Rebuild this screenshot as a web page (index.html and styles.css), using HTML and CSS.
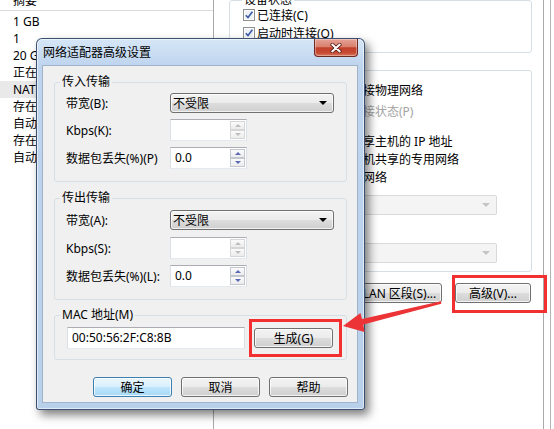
FILE: index.html
```html
<!DOCTYPE html>
<html lang="zh-CN">
<head>
<meta charset="utf-8">
<title>网络适配器高级设置</title>
<link rel="stylesheet" href="styles.css">
</head>
<body>
<div class="screen">
  <div class="list">
    <div class="list-head"><span>摘要</span></div>
    <div class="rows">
      <div class="row">1 GB</div>
      <div class="row">1</div>
      <div class="row">20 GB</div>
      <div class="row">正在使用文件 ...</div>
      <div class="row sel">NAT</div>
      <div class="row">存在</div>
      <div class="row">自动检测</div>
      <div class="row">存在</div>
      <div class="row">自动检测</div>
    </div>
  </div>
  <div class="pane">
    <fieldset class="grp grp-dev">
      <legend>设备状态</legend>
      <div class="chk"><svg class="cb" width="12" height="12" viewBox="0 0 12 12"><rect x="0.5" y="0.5" width="11" height="11" fill="#fff" stroke="#8e8f8f"/><rect x="2" y="2" width="8" height="8" fill="#eef1f6"/><path d="M2.8 6.2 L5 8.6 L9.4 2.8" fill="none" stroke="#3b5ba5" stroke-width="1.6"/></svg><span>已连接(C)</span></div>
      <div class="chk"><svg class="cb" width="12" height="12" viewBox="0 0 12 12"><rect x="0.5" y="0.5" width="11" height="11" fill="#fff" stroke="#8e8f8f"/><rect x="2" y="2" width="8" height="8" fill="#eef1f6"/><path d="M2.8 6.2 L5 8.6 L9.4 2.8" fill="none" stroke="#3b5ba5" stroke-width="1.6"/></svg><span>启动时连接(O)</span></div>
    </fieldset>
    <fieldset class="grp grp-net">
      <legend>网络连接</legend>
      <div class="opt o1"><span class="pre"><span>桥接模式(B): 直接连</span></span><span>接物理网络</span></div>
      <div class="opt o2 dim"><span class="pre"><span>复制物理网络连</span></span><span>接状态(P)</span></div>
      <div class="opt o3"><span class="pre"><span>NAT 模式(N): 用于共</span></span><span>享主机的 IP 地址</span></div>
      <div class="opt"><span class="pre"><span>仅主机模式(H): 与主</span></span><span>机共享的专用网络</span></div>
      <div class="opt"><span class="pre"><span>自定义(U): 特定虚拟</span></span><span>网络</span></div>
      <div class="combo-off c1"><i class="tri-off"></i></div>
      <div class="opt o6"><span class="pre"><span>LAN 区段(L):</span></span><span></span></div>
      <div class="combo-off c2"><i class="tri-off"></i></div>
    </fieldset>
    <div class="pane-btns">
      <div class="btn lan">LAN 区段(S)...</div>
      <div class="btn adv">高级(V)...</div>
    </div>
  </div>
  <div class="edge"></div>
</div>

<div class="dialog">
  <div class="titlebar">
    <span class="title">网络适配器高级设置</span>
    <span class="close"><svg width="12" height="10" viewBox="0 0 12 10"><path d="M2.2 1.6 L9.8 8.4 M9.8 1.6 L2.2 8.4" stroke="#5a1f16" stroke-width="3.6" stroke-linecap="round"/><path d="M2.2 1.6 L9.8 8.4 M9.8 1.6 L2.2 8.4" stroke="#ffffff" stroke-width="2" stroke-linecap="round"/></svg></span>
  </div>
  <div class="client">
    <fieldset class="grp dgrp g1">
      <legend>传入传输</legend>
      <div class="frow r1"><span class="lbl">带宽(B):</span><div class="combo"><span>不受限</span><i class="tri"></i></div></div>
      <div class="frow r2"><span class="lbl">Kbps(K):</span><div class="spin off"><span class="val"></span><span class="arrows"><i class="sb up"></i><i class="sb dn"></i></span></div></div>
      <div class="frow r3"><span class="lbl">数据包丢失(%)(P)</span><div class="spin"><span class="val">0.0</span><span class="arrows"><i class="sb up"></i><i class="sb dn"></i></span></div></div>
    </fieldset>
    <fieldset class="grp dgrp g2">
      <legend>传出传输</legend>
      <div class="frow r1"><span class="lbl">带宽(A):</span><div class="combo"><span>不受限</span><i class="tri"></i></div></div>
      <div class="frow r2"><span class="lbl">Kbps(S):</span><div class="spin off"><span class="val"></span><span class="arrows"><i class="sb up"></i><i class="sb dn"></i></span></div></div>
      <div class="frow r3"><span class="lbl">数据包丢失(%)(L):</span><div class="spin"><span class="val">0.0</span><span class="arrows"><i class="sb up"></i><i class="sb dn"></i></span></div></div>
    </fieldset>
    <fieldset class="grp dgrp g3">
      <legend>MAC 地址(M)</legend>
      <div class="macrow">
        <div class="mac">00:50:56:2F:C8:8B</div>
        <div class="btn gen">生成(G)</div>
      </div>
    </fieldset>
    <div class="dbtns">
      <div class="btn def">确定</div>
      <div class="btn">取消</div>
      <div class="btn">帮助</div>
    </div>
  </div>
</div>

<div class="mark mark-gen"></div>
<div class="mark mark-adv"></div>
<svg class="arrow" width="554" height="429" viewBox="0 0 554 429">
  <polygon points="343,326 360.5,313 362,319 440.8,301.3 441.4,303.7 363.4,324.6 364.5,332" fill="#ec3336"/>
</svg>
</body>
</html>
```

FILE: styles.css
```css
* { box-sizing: border-box; }
html, body { margin: 0; padding: 0; }
body {
  width: 554px;
  height: 429px;
  overflow: hidden;
  position: relative;
  background: #fff;
  color: #000;
  font-family: "Noto Sans", "Noto Sans CJK SC", sans-serif;
  font-size: 12px;
}

/* ---------- background window ---------- */
.screen { display: flex; height: 429px; }

.list { width: 214px; border-right: 1px solid #a9a9a9; flex: none; }
.list-head { display: flow-root; height: 11px; border-bottom: 1px solid #dcdcdc; overflow: hidden; }
.list-head span { display: block; margin-top: -9px; line-height: 20px; padding-left: 13px; }
.rows { padding-top: 2px; }
.row { height: 17px; line-height: 17px; padding-left: 13px; white-space: nowrap; }
.row.sel { background: #e9e9e9; }

.pane {
  width: 330px;
  flex: none;
  border-right: 1px solid #a9a9a9;
  padding: 0 11px 0 15px;
}
.edge { width: 7px; flex: none; border-right: 1px solid #b4b4b4; }

.grp { margin: 0; min-width: 0; border: 1px solid #d5dfe5; border-radius: 3px; }
.grp-dev { margin-top: -6px; padding: 0 10px 10px 13px; }
.grp-dev legend, .grp-net legend { line-height: 12px; padding: 0 2px; margin-left: -1px; }
.chk { display: flex; align-items: center; height: 18px; gap: 2px; }
.cb { flex: none; }

.grp-net { margin-top: 11px; padding: 0 10px 8px 17px; }
.opt { display: flex; height: 18px; line-height: 18px; white-space: nowrap; }
.opt.o1 { margin-top: 6px; }
.opt.o2 { margin-top: 3px; }
.opt.o3 { margin-top: 12px; }
.opt.o6 { margin-top: 6px; }
.opt.dim { color: #a3a3a3; }
.pre { width: 116px; flex: none; display: flex; justify-content: flex-end; overflow: hidden; }

.combo-off {
  height: 20px;
  width: 232px;
  margin-left: 18px;
  border: 1px solid #d9d9d9;
  border-radius: 2px;
  background: #f4f4f4;
  display: flex;
  align-items: center;
  justify-content: flex-end;
  padding-right: 6px;
}
.combo-off.c1 { margin-top: 8px; }
.combo-off.c2 { margin-top: 4px; }
.tri-off { width: 0; height: 0; border-left: 4px solid transparent; border-right: 4px solid transparent; border-top: 4px solid #c4c4c4; }

.pane-btns { display: flex; justify-content: flex-end; gap: 13px; margin-top: 11px; padding-right: 1px; }

.btn {
  height: 20px;
  border: 1px solid #707070;
  border-radius: 3px;
  background: linear-gradient(#f3f3f3 0%, #ebebeb 50%, #dddddd 50%, #cfcfcf 100%);
  box-shadow: inset 0 0 0 1px rgba(255,255,255,0.75);
  display: flex;
  align-items: center;
  justify-content: center;
  white-space: nowrap;
  flex: none;
}
.btn.lan { width: 85px; }
.btn.adv { width: 76px; }
.btn.def {
  border-color: #3c7fb1;
  background: linear-gradient(#eaf6fd 0%, #d9f0fc 50%, #bee6fd 50%, #a7d9f5 100%);
}

/* ---------- dialog window ---------- */
.dialog {
  position: absolute;
  left: 36px;
  top: 38px;
  width: 329px;
  height: 372px;
  border: 1px solid rgba(36, 58, 92, 0.85);
  border-radius: 6px 6px 3px 3px;
  background: linear-gradient(180deg, #d6e6f7 0%, #bfd5ee 26px, #b9d0ea 100%);
  box-shadow: inset 0 0 0 1px rgba(255,255,255,0.55), 4px 5px 10px rgba(0,0,0,0.5);
  padding: 0 6px 6px 5px;
  display: flex;
  flex-direction: column;
}
.titlebar { height: 26px; display: flex; justify-content: space-between; align-items: flex-start; flex: none; }
.title { line-height: 27px; padding-left: 1px; }
.close {
  width: 44px;
  height: 18px;
  border: 1px solid #6e2a20;
  border-top: none;
  border-radius: 0 0 4px 4px;
  background: linear-gradient(#e5a296 0%, #d9806f 45%, #c2402a 52%, #c64a32 80%, #d8755a 100%);
  box-shadow: inset 0 0 0 1px rgba(255,255,255,0.35);
  display: flex;
  align-items: center;
  justify-content: center;
}

.client {
  flex: 1;
  background: #f0f0f0;
  border: 1px solid #9fb3cc;
  padding: 8px 10px 5px 11px;
}
.dgrp { padding: 0 11px 12px 11px; }
.dgrp legend { line-height: 16px; padding: 0 2px; margin-left: -6px; }
.g2 { margin-top: 8px; }
.g3 { margin-top: 7px; padding-bottom: 10px; }

.frow { display: flex; align-items: center; }
.g1 .r1 { margin-top: 3px; }
.g1 .r2, .g1 .r3 { margin-top: 6px; }
.g2 .r1 { margin-top: 4px; }
.g2 .r2 { margin-top: 7px; }
.g2 .r3 { margin-top: 6px; }
.lbl { width: 104px; flex: none; white-space: nowrap; }

.combo {
  width: 164px;
  height: 20px;
  border: 1px solid #707070;
  border-radius: 3px;
  background: linear-gradient(#f3f3f3 0%, #ebebeb 50%, #dddddd 50%, #cfcfcf 100%);
  box-shadow: inset 0 0 0 1px rgba(255,255,255,0.7);
  display: flex;
  align-items: center;
  justify-content: space-between;
  padding: 0 6px 0 2px;
}
.tri { width: 0; height: 0; border-left: 4px solid transparent; border-right: 4px solid transparent; border-top: 4px solid #000; }

.spin {
  width: 77px;
  height: 22px;
  display: flex;
  background: #fff;
  border: 1px solid #dbdfe6;
  border-top-color: #abadb3;
  border-bottom-color: #e3e9ef;
}
.val { flex: 1; padding-left: 4px; line-height: 20px; }
.arrows { width: 16px; flex: none; display: flex; flex-direction: column; padding: 1px 1px 1px 0; }
.sb {
  flex: 1;
  border: 1px solid #c3c7cf;
  background: linear-gradient(#fbfbfb, #ececec);
  display: flex;
  align-items: center;
  justify-content: center;
  color: #5d6ab8;
}
.spin.off .sb { border-color: #d6d6d6; color: #bdbdbd; }
.sb.up::after { content: ""; border-left: 3px solid transparent; border-right: 3px solid transparent; border-bottom: 3px solid currentColor; }
.sb.dn::after { content: ""; border-left: 3px solid transparent; border-right: 3px solid transparent; border-top: 3px solid currentColor; }

.macrow { display: flex; align-items: center; margin-top: 4px; gap: 9px; }
.mac {
  width: 178px;
  height: 22px;
  margin-left: 1px;
  background: #fff;
  border: 1px solid #dbdfe6;
  border-top-color: #abadb3;
  border-bottom-color: #e3e9ef;
  line-height: 20px;
  padding-left: 4px;
}
.btn.gen { width: 79px; }

.dbtns { display: flex; gap: 9px; margin-top: 17px; padding-left: 39px; }
.dbtns .btn { width: 79px; }

/* ---------- annotations ---------- */
.mark { position: absolute; border: 3px solid #f2302f; }
.mark-gen { left: 249px; top: 319px; width: 93px; height: 38px; }
.mark-adv { left: 452px; top: 275px; width: 95px; height: 38px; }
.arrow { position: absolute; left: 0; top: 0; pointer-events: none; }
```
